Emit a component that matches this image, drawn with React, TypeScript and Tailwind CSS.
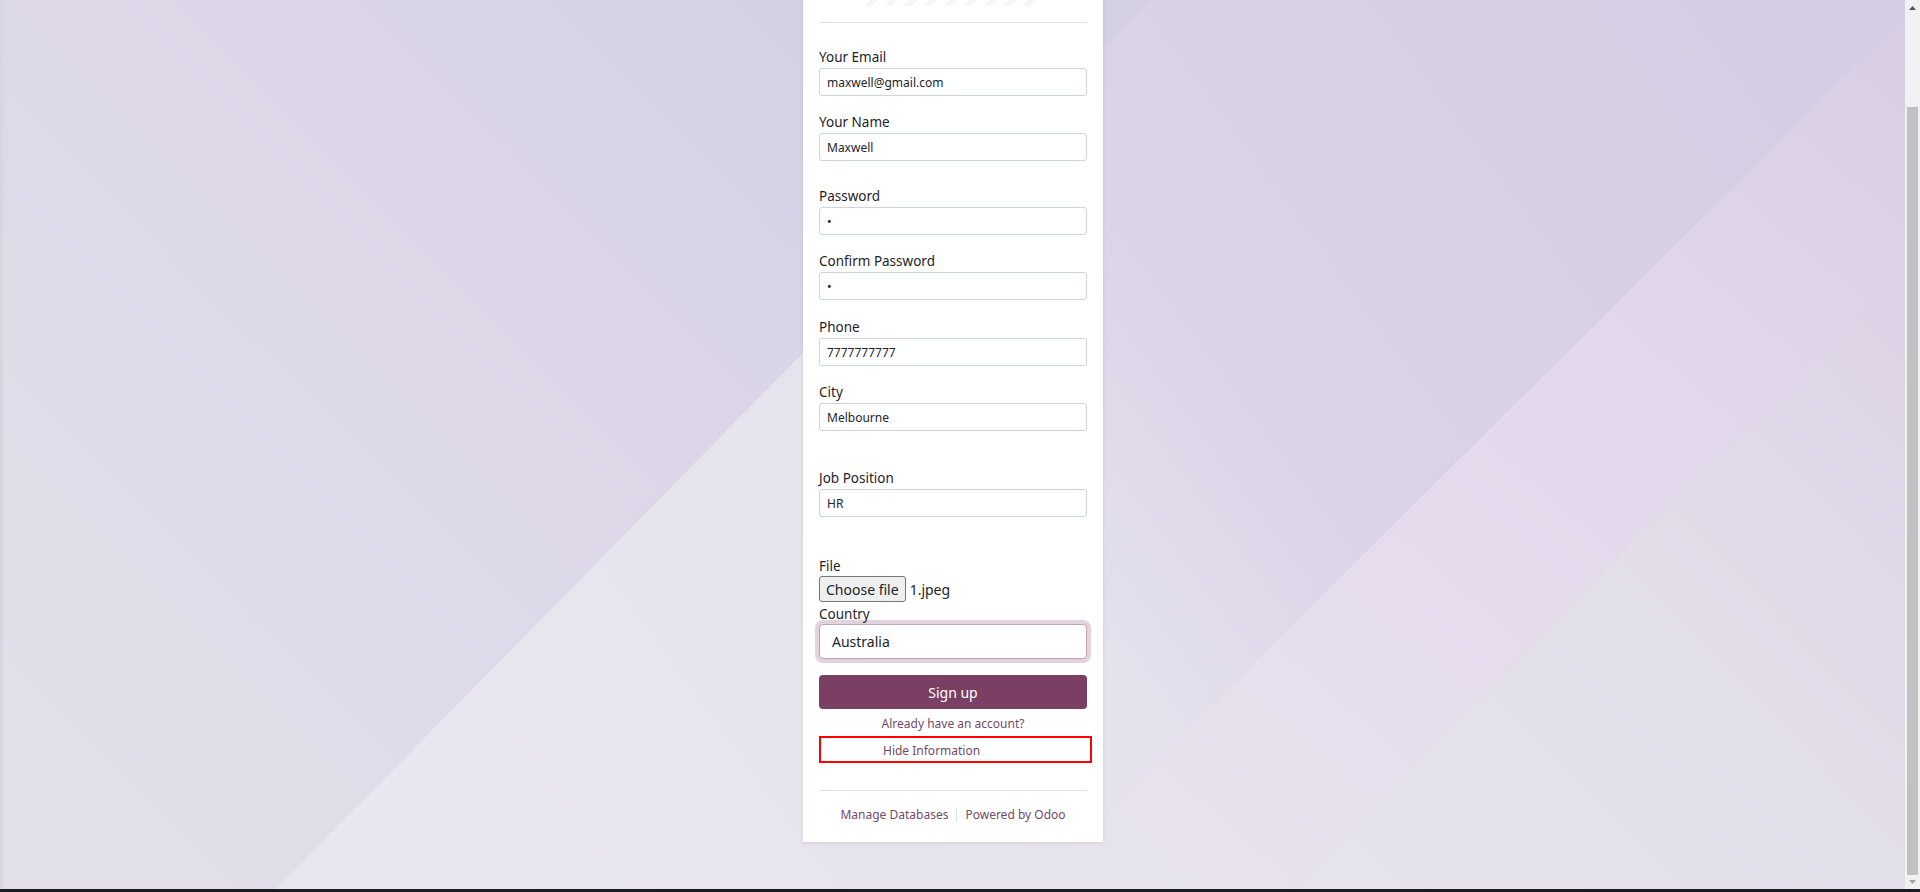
import React from "react";

interface FieldProps {
  label: string;
  value: string;
  type?: string;
  className?: string;
}

function Field({ label, value, type = "text", className = "" }: FieldProps) {
  return (
    <div className={className}>
      <label className="block pt-[3px] text-[13.5px] leading-[21px] text-[#1f2326]">{label}</label>
      <input
        readOnly
        type={type}
        value={value}
        className="block h-[28px] w-full rounded-[3px] border border-[#ced4da] bg-white pl-[7px] text-[12px] text-[#212529] outline-none"
      />
    </div>
  );
}

function Backdrop() {
  return (
    <svg
      className="pointer-events-none absolute inset-0 h-full w-full"
      viewBox="0 0 1902 889"
      preserveAspectRatio="none"
    >
      <defs>
        <linearGradient id="band0" gradientUnits="userSpaceOnUse" x1="900" y1="0" x2="100" y2="800">
          <stop offset="0" stopColor="#d5cfe4" />
          <stop offset="0.5" stopColor="#ddd7e8" />
          <stop offset="1" stopColor="#e2dfe9" />
        </linearGradient>
        <linearGradient id="band1" gradientUnits="userSpaceOnUse" x1="500" y1="889" x2="1700" y2="0">
          <stop offset="0" stopColor="#e8e6ee" />
          <stop offset="0.4" stopColor="#e6e2ed" />
          <stop offset="0.6" stopColor="#dbd3e7" />
          <stop offset="1" stopColor="#d5cde3" />
        </linearGradient>
        <linearGradient id="band2" gradientUnits="userSpaceOnUse" x1="1150" y1="889" x2="1905" y2="17">
          <stop offset="0" stopColor="#e7e3ec" />
          <stop offset="0.4" stopColor="#e6dbed" />
          <stop offset="0.65" stopColor="#e2d6ea" />
          <stop offset="1" stopColor="#d9cde3" />
        </linearGradient>
        <linearGradient id="band3" gradientUnits="userSpaceOnUse" x1="1300" y1="889" x2="1905" y2="300">
          <stop offset="0" stopColor="#e6e3ec" />
          <stop offset="0.5" stopColor="#e3dfea" />
          <stop offset="1" stopColor="#ddd2e5" />
        </linearGradient>
      </defs>
      <rect x="0" y="0" width="1902" height="889" fill="url(#band0)" />
      <polygon points="1147,0 1902,0 1902,17 1023,889 273,889" fill="url(#band1)" />
      <polygon points="1902,17 1902,265 1290,889 1023,889" fill="url(#band2)" />
      <polygon points="1902,265 1902,889 1290,889" fill="url(#band3)" />
    </svg>
  );
}

function Scrollbar() {
  return (
    <div className="flex h-full w-[15px] shrink-0 flex-col items-center bg-[#f1f1f1]">
      <svg className="mt-[6px]" width="7" height="4" viewBox="0 0 7 4">
        <polygon points="3.5,0 7,4 0,4" fill="#505050" />
      </svg>
      <div className="mt-[97px] h-[768px] w-[11px] bg-[#c1c1c1]" />
      <svg className="mt-[5px]" width="7" height="4" viewBox="0 0 7 4">
        <polygon points="0,0 7,0 3.5,4" fill="#a3a3a3" />
      </svg>
    </div>
  );
}

export default function App() {
  return (
    <div className="flex h-[892px] w-full flex-col overflow-hidden font-['Noto_Sans','Open_Sans',sans-serif]">
      <div className="flex min-h-0 flex-1">
        <main className="relative flex flex-1 flex-col items-center justify-end overflow-hidden border-l-[3px] border-[#d8d5e1] pr-[2px] pb-[47px]">
          <Backdrop />
          <div className="relative w-[300px] shrink-0 bg-white px-4 pt-6 pb-[17px] shadow-[0_1px_3px_rgba(60,40,80,0.12)]">
            <div className="mx-auto h-[60px] w-[176px] bg-[repeating-linear-gradient(135deg,#f5f5f7_0px,#f5f5f7_5px,#ffffff_5px,#ffffff_14px)]" />
            <hr className="mt-4 border-t border-[#dee2e6]" />

            <form className="pt-[21px]">
              <Field label="Your Email" value="maxwell@gmail.com" className="mb-[13px]" />
              <Field label="Your Name" value="Maxwell" className="mb-[22px]" />
              <Field label="Password" value="1" type="password" className="mb-[13px]" />
              <Field label="Confirm Password" value="1" type="password" className="mb-[14px]" />
              <Field label="Phone" value="7777777777" className="mb-[13px]" />
              <Field label="City" value="Melbourne" className="mb-[34px]" />
              <Field label="Job Position" value="HR" className="mb-[36px]" />

              <label className="block pt-[3px] text-[13.5px] leading-[20px] text-[#1f2326]">File</label>
              <div className="flex h-[26px] items-center text-[14px] text-[#212529]">
                <span className="flex h-[26px] items-center rounded-[3px] border border-[#767676] bg-[#efefef] px-[6px]">
                  Choose file
                </span>
                <span className="ml-[4px]">1.jpeg</span>
              </div>

              <label className="block pt-[2px] text-[13.5px] leading-[20px] text-[#1f2326]">Country</label>
              <input
                readOnly
                value="Australia"
                className="block h-[35px] w-full rounded-[4px] border border-[#c4a2bb] bg-white pl-[12px] text-[14px] text-[#212529] shadow-[0_0_0_4px_#e2d3df] outline-none"
              />

              <button
                type="button"
                className="mt-4 block h-[34px] w-full rounded-[4px] bg-[#7b3f64] text-[14px] text-white"
              >
                Sign up
              </button>

              <div className="mt-[5px] text-center text-[12px] leading-[20px]">
                <a href="#" className="text-[#714b67]">
                  Already have an account?
                </a>
              </div>

              <div className="mt-[2px] h-[27px] w-[273px] border-2 border-[#ff0000] pt-[3px] pl-[62px] text-[12px] leading-[20px] text-[#714b67]">
                Hide Information
              </div>
            </form>

            <div className="mt-[27px] flex items-center justify-center border-t border-[#dee2e6] pt-[14px] text-[12px] leading-[20px] text-[#714b67]">
              <a href="#">Manage Databases</a>
              <span className="mx-[8px] h-[14px] w-px bg-[#dee2e6]" />
              <a href="#">Powered by Odoo</a>
            </div>
          </div>
        </main>
        <Scrollbar />
      </div>
      <div className="h-[3px] shrink-0 bg-[#1c1a22]" />
    </div>
  );
}
